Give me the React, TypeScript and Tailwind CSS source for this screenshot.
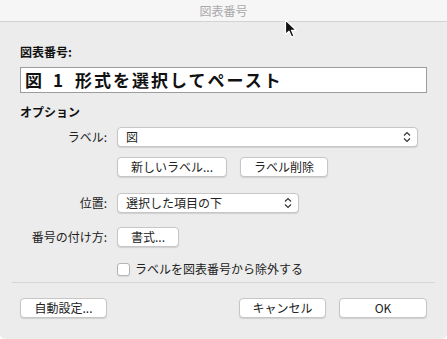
import React from "react";

const font = { fontFamily: '"Noto Sans CJK JP", "Noto Sans", sans-serif' };

function Chevrons() {
  return (
    <svg width="8" height="12" viewBox="0 0 8 12" className="absolute right-[6px] top-1/2 -translate-y-1/2">
      <path d="M1 4.5 L4 1.5 L7 4.5" fill="none" stroke="#333" strokeWidth="1.2" />
      <path d="M1 7.5 L4 10.5 L7 7.5" fill="none" stroke="#333" strokeWidth="1.2" />
    </svg>
  );
}

function Select({ w, text }: { w: string; text: string }) {
  return (
    <div
      className={`relative h-[20px] ${w} bg-white rounded-[4px] border border-[#c6c6c6] shadow-[0_1px_1px_rgba(0,0,0,0.12)] flex items-center pl-[8px] text-[12px] text-[#222]`}
    >
      <span>{text}</span>
      <Chevrons />
    </div>
  );
}

function Button({ w, text, cls = "" }: { w: string; text: string; cls?: string }) {
  return (
    <div
      className={`h-[20px] ${w} bg-white rounded-[4px] border border-[#c6c6c6] shadow-[0_1px_1px_rgba(0,0,0,0.12)] flex items-center justify-center text-[12px] text-[#222] ${cls}`}
    >
      {text}
    </div>
  );
}

function Row({ label, children, cls = "" }: { label: string; children: React.ReactNode; cls?: string }) {
  return (
    <div className={`flex items-center ${cls}`}>
      <div className="w-[107px] text-right text-[12px] text-[#222] leading-[16px]">{label}</div>
      <div className="ml-[10px] flex items-center">{children}</div>
    </div>
  );
}

export default function App() {
  return (
    <div className="w-[447px] h-[339px] bg-white" style={font}>
      <div className="relative w-[447px] h-[339px] bg-[#ececec] rounded-b-[5px] overflow-hidden flex flex-col">
        <div className="h-[22px] bg-[#f6f6f6] border-b border-[#d3d3d3] flex items-center justify-center text-[12px] text-[#a9a9a9] leading-[16px] shrink-0">
          図表番号
        </div>
        <div className="flex flex-col">
          <div className="mt-[22px] ml-[20px] text-[12px] font-bold text-[#111] leading-[16px]">図表番号:</div>
          <div className="mt-[7px] ml-[20px] w-[407px] h-[26px] bg-white border border-[#9c9c9c] flex items-center pl-[4px] text-[17px] font-bold text-[#111] tracking-[2px] leading-[24px]">
            <span>図</span>
            <span className="ml-[9px]">1</span>
            <span className="ml-[10px]">形式を選択してペースト</span>
          </div>
          <div className="mt-[11px] ml-[20px] text-[12px] font-bold text-[#111] leading-[16px]">オプション</div>
          <Row label="ラベル:" cls="mt-[7px]">
            <Select w="w-[301px]" text="図" />
          </Row>
          <div className="mt-[10px] ml-[117px] flex gap-[13px]">
            <Button w="w-[110px]" text="新しいラベル..." />
            <Button w="w-[88px]" text="ラベル削除" />
          </div>
          <Row label="位置:" cls="mt-[16px]">
            <Select w="w-[182px]" text="選択した項目の下" />
          </Row>
          <Row label="番号の付け方:" cls="mt-[14px]">
            <Button w="w-[62px]" text="書式..." />
          </Row>
          <div className="mt-[14px] ml-[117px] h-[16px] flex items-center">
            <div className="w-[13px] h-[13px] bg-white border border-[#b4b4b4] rounded-[3px] shadow-[0_1px_1px_rgba(0,0,0,0.08)]" />
            <span className="ml-[5px] text-[12px] text-[#222] leading-[16px]">ラベルを図表番号から除外する</span>
          </div>
          <div className="mt-[5px] mx-[12px] h-px bg-[#d6d6d6]" />
          <div className="mt-[15px] flex px-[20px]">
            <Button w="w-[87px]" text="自動設定..." />
            <div className="flex-1" />
            <Button w="w-[87px]" text="キャンセル" />
            <Button w="w-[88px]" text="OK" cls="ml-[13px]" />
          </div>
        </div>
        <svg width="14" height="20" viewBox="0 0 14 20" className="absolute left-[284px] top-[19px]">
          <path d="M1.5 1 L1.5 15.5 L5 12.2 L7.6 18 L10 17 L7.5 11.3 L12.2 11.3 Z" fill="#111" stroke="#fff" strokeWidth="1.2" strokeLinejoin="round" />
        </svg>
      </div>
    </div>
  );
}
